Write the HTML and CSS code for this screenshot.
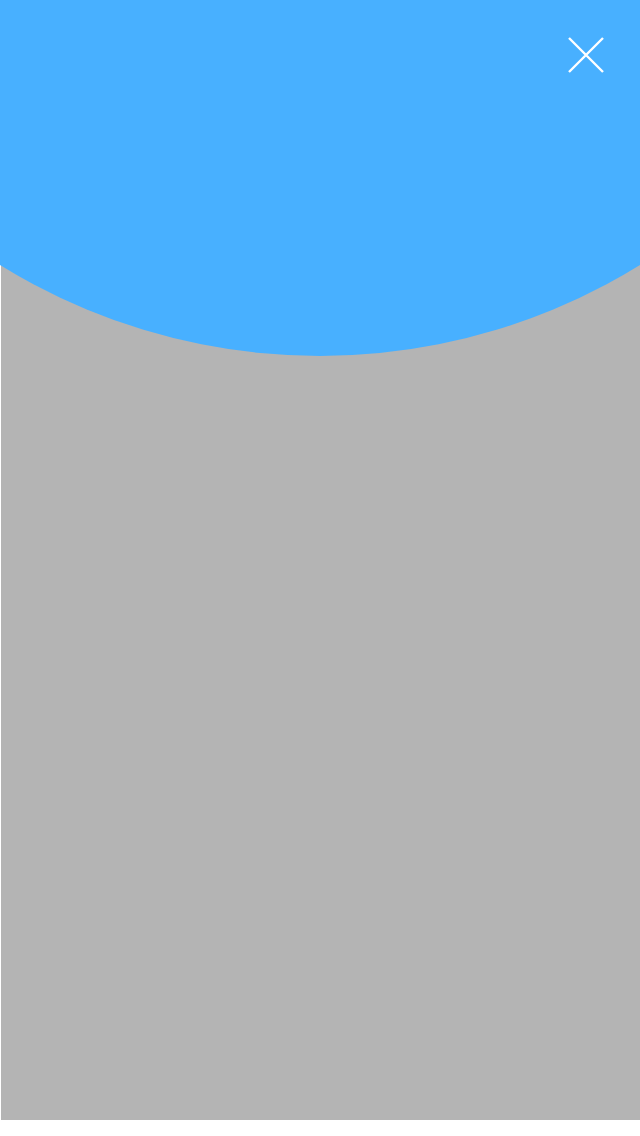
FILE: index.html
```html
<!DOCTYPE html>
<html lang="en">
<head>
<meta charset="utf-8">
<title>Screen</title>
<link rel="stylesheet" href="styles.css">
</head>
<body>
<div class="screen">
  <div class="panel"></div>
  <div class="hero"></div>
  <button class="close" aria-label="Close">
    <svg width="36" height="36" viewBox="0 0 36 36"><path d="M1 1 L35 35 M35 1 L1 35" stroke="#fff" stroke-width="2.4" fill="none"/></svg>
  </button>
</div>
</body>
</html>
```
FILE: styles.css
```css
html, body {
  margin: 0;
  padding: 0;
  background: #ffffff;
  font-family: "Liberation Sans", Arial, sans-serif;
}
.screen {
  position: relative;
  width: 640px;
  height: 1136px;
  overflow: hidden;
}
.panel {
  margin-left: 1px;
  width: 639px;
  height: 1120px;
  background: #b4b4b4;
}
.hero {
  position: absolute;
  left: -288px;
  top: -860px;
  width: 1216px;
  height: 1216px;
  border-radius: 50%;
  background: #48b0ff;
}
.close {
  position: absolute;
  top: 37px;
  left: 568px;
  width: 36px;
  height: 36px;
  padding: 0;
  border: 0;
  background: transparent;
  display: block;
}
.close svg { display: block; }
```
